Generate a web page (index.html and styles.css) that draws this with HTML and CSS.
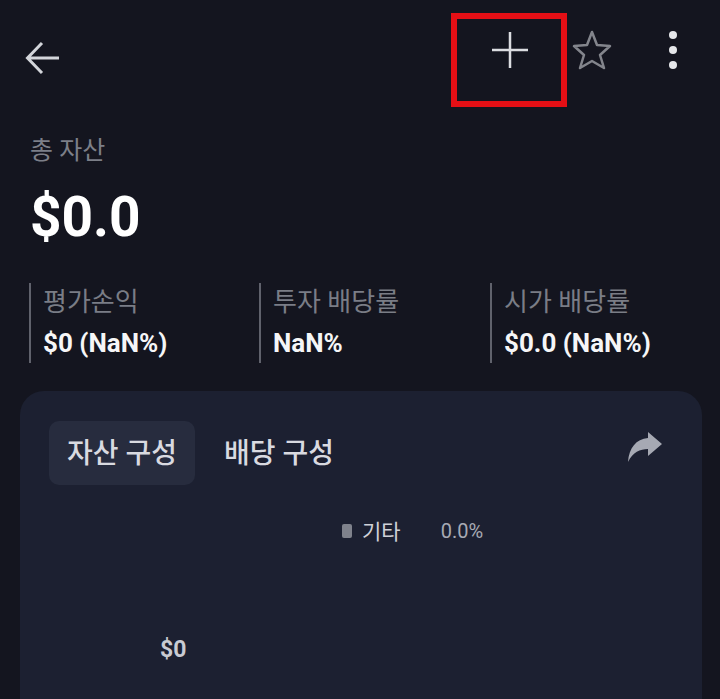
FILE: index.html
```html
<!DOCTYPE html>
<html lang="ko">
<head>
  <meta charset="UTF-8">
  <meta name="viewport" content="width=device-width, initial-scale=1.0">
  <title>총 자산</title>
  <link rel="stylesheet" href="styles.css">
</head>
<body>
  <header class="topbar">
    <svg class="back-icon" width="36" height="34" viewBox="0 0 36 34">
      <path d="M34 17H3M17 2L2.500 17L17 32" fill="none" stroke="#d3d5da" stroke-width="3"/>
    </svg>
    <div class="actions">
      <div class="add-box">
        <svg width="38" height="38" viewBox="0 0 38 38">
          <path d="M19 1V37M1 19H37" fill="none" stroke="#dcdde1" stroke-width="2.500"/>
        </svg>
      </div>
      <svg class="star-icon" width="40" height="40" viewBox="0 0 40 40">
        <path d="M20 2L25 15L38 16L28 25L32 38L20 31L8 38L12 25L2 16L15 15Z" fill="none" stroke="#83858c" stroke-width="2.500" stroke-linejoin="round"/>
      </svg>
      <div class="more">
        <span class="dot"></span>
        <span class="dot"></span>
        <span class="dot"></span>
      </div>
    </div>
  </header>

  <section class="summary">
    <p class="summary-label">총 자산</p>
    <p class="summary-value">$0.0</p>
  </section>

  <section class="stats">
    <div class="stat">
      <p class="stat-label">평가손익</p>
      <p class="stat-value">$0 (NaN%)</p>
    </div>
    <div class="stat">
      <p class="stat-label">투자 배당률</p>
      <p class="stat-value">NaN%</p>
    </div>
    <div class="stat">
      <p class="stat-label">시가 배당률</p>
      <p class="stat-value">$0.0 (NaN%)</p>
    </div>
  </section>

  <section class="card">
    <div class="card-head">
      <div class="tabs">
        <span class="tab tab-active">자산 구성</span>
        <span class="tab">배당 구성</span>
      </div>
      <svg class="share-icon" width="36" height="32" viewBox="0 0 36 32">
        <path d="M21 1L35 13L21 25V18C13 18 6 21 1 31C2 17 9 8 21 7Z" fill="#a6a9b3"/>
      </svg>
    </div>
    <div class="legend">
      <span class="legend-mark"></span>
      <span class="legend-name">기타</span>
      <span class="legend-pct">0.0%</span>
    </div>
    <p class="chart-total">$0</p>
  </section>
</body>
</html>
```
FILE: styles.css
```css
* {
  box-sizing: border-box;
}
html, body {
  height: 100%;
}
body {
  margin: 0;
  height: 699px;
  overflow: hidden;
  background-color: #14151f;
  font-family: Roboto, "Noto Sans CJK KR", sans-serif;
  color: #fff;
}
p {
  margin: 0;
}
.topbar {
  display: flex;
  justify-content: space-between;
  align-items: flex-start;
  height: 107px;
  padding: 13px 0 0 25px;
}
.back-icon {
  margin-top: 28px;
}
.actions {
  display: flex;
  align-items: flex-start;
}
.add-box {
  display: flex;
  align-items: center;
  justify-content: center;
  width: 116px;
  height: 94px;
  border: 6px solid #e40f15;
  padding-bottom: 20px;
  padding-left: 2px;
}
.star-icon {
  margin: 17px 0 0 5px;
}
.more {
  display: flex;
  flex-direction: column;
  gap: 7px;
  margin: 18px 43px 0 57px;
}
.dot {
  width: 8px;
  height: 8px;
  border-radius: 50%;
  background-color: #e6e7ea;
}
.summary {
  padding: 27px 0 0 30px;
}
.summary-label {
  font-size: 25px;
  line-height: 34px;
  color: #7c7f88;
}
.summary-value {
  margin-top: 16px;
  font-size: 55px;
  line-height: 66px;
  font-weight: 700;
}
.stats {
  display: grid;
  grid-template-columns: 230px 231px 1fr;
  margin-top: 33px;
  padding-left: 29px;
}
.stat {
  height: 80px;
  border-left: 2px solid #60626c;
  padding-left: 12px;
}
.stat-label {
  margin-top: 1px;
  font-size: 26px;
  line-height: 36px;
  color: #7a7d86;
}
.stat-value {
  margin-top: 7px;
  font-size: 26px;
  line-height: 32px;
  font-weight: 700;
  color: #f6f6f7;
}
.card {
  height: 320px;
  margin: 28px 18px 0 20px;
  padding: 30px 37px 0 29px;
  background-color: #1c2031;
  border-radius: 24px 24px 0 0;
}
.card-head {
  display: flex;
  justify-content: space-between;
  align-items: flex-start;
}
.tabs {
  display: flex;
  gap: 11px;
}
.tab {
  display: block;
  padding: 0 18px;
  height: 64px;
  font-size: 28px;
  font-weight: 500;
  line-height: 65px;
  color: #d9dae0;
}
.tab-active {
  background-color: #272c3e;
  border-radius: 10px;
}
.share-icon {
  margin: 10px 2px 0 0;
}
.legend {
  display: flex;
  align-items: center;
  margin: 31px 0 0 293px;
  height: 30px;
}
.legend-mark {
  width: 10px;
  height: 14px;
  background-color: #7f828c;
  border-radius: 2px;
}
.legend-name {
  margin-left: 10px;
  margin-bottom: 3px;
  font-size: 21px;
  color: #cfd1d8;
}
.legend-pct {
  margin-left: 40px;
  font-size: 20px;
  color: #a7aab4;
}
.chart-total {
  margin: 89px 0 0 111px;
  font-size: 23px;
  font-weight: 700;
  line-height: 30px;
  color: #c9cbd3;
}
```
